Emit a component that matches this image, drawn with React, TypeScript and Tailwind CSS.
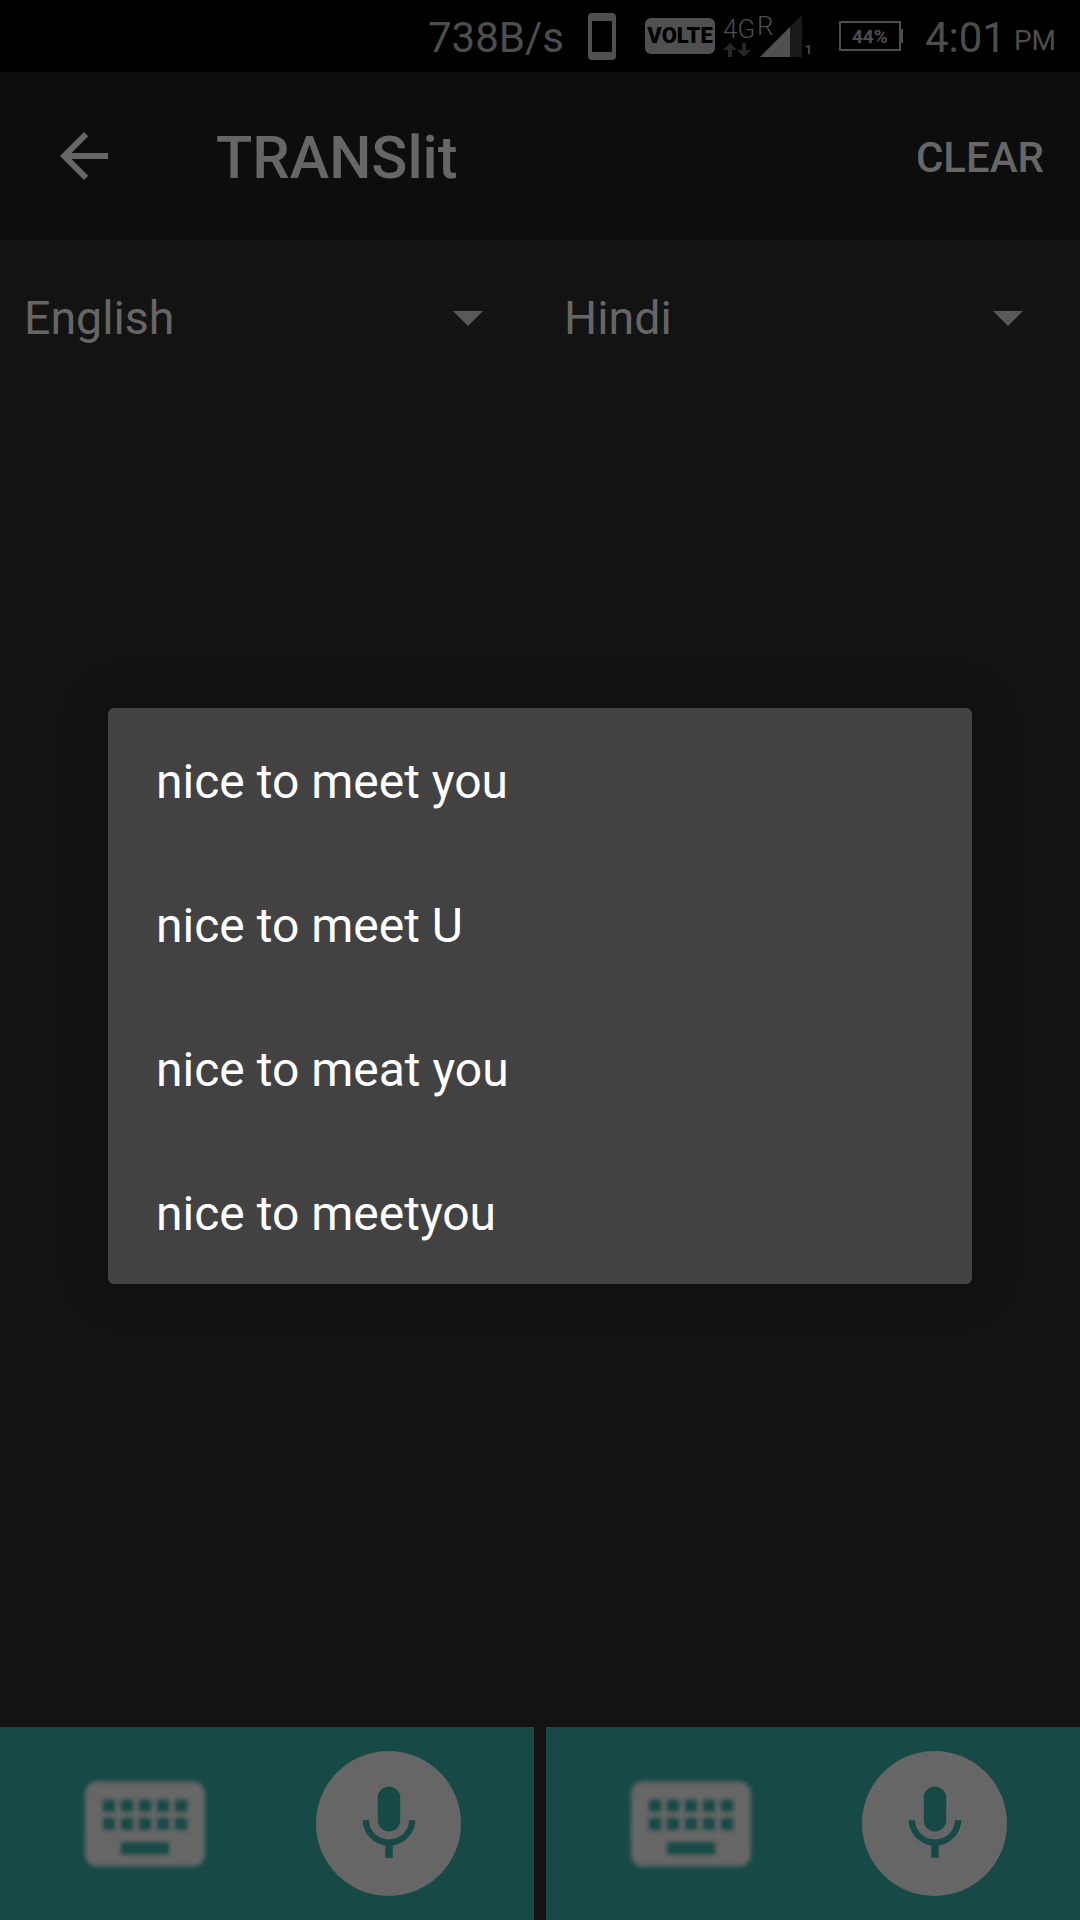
const font = { fontFamily: "Roboto, 'Noto Sans', sans-serif" };

function Keyboard() {
  return (
    <svg width="144" height="146" viewBox="0 0 24 24" preserveAspectRatio="none" className="shrink-0 blur-[2px]" fill="#666666">
      <path d="M20 5H4c-1.1 0-1.99.9-1.99 2L2 17c0 1.1.9 2 2 2h16c1.1 0 2-.9 2-2V7c0-1.1-.9-2-2-2zm-9 3h2v2h-2V8zm0 3h2v2h-2v-2zM8 8h2v2H8V8zm0 3h2v2H8v-2zm-1 2H5v-2h2v2zm0-3H5V8h2v2zm9 7H8v-2h8v2zm0-4h-2v-2h2v2zm0-3h-2V8h2v2zm3 3h-2v-2h2v2zm0-3h-2V8h2v2z" />
    </svg>
  );
}

function Panel({ className }: { className: string }) {
  return (
    <div className={"flex items-center bg-[#174a46] pl-[73px] " + className}>
      <Keyboard />
      <div className="ml-[99px] flex h-[145px] w-[145px] shrink-0 items-center justify-center rounded-full bg-[#666666]">
        <svg width="90" height="90" viewBox="0 0 24 24" fill="#174a46">
          <path d="M12 14c1.66 0 2.99-1.34 2.99-3L15 5c0-1.66-1.34-3-3-3S9 3.34 9 5v6c0 1.66 1.34 3 3 3zm5.3-3c0 3-2.54 5.1-5.3 5.1S6.7 14 6.7 11H5c0 3.41 2.72 6.23 6 6.72V21h2v-3.28c3.28-.48 6-3.3 6-6.72h-1.7z" />
        </svg>
      </div>
    </div>
  );
}

function Spinner({ label, className }: { label: string; className: string }) {
  return (
    <div className={"flex items-center " + className}>
      <span className="text-[46.5px] leading-[56px] text-[#666666]">{label}</span>
      <div className="ml-auto h-0 w-0 border-x-[15px] border-t-[15px] border-x-transparent border-t-[#595959]" />
    </div>
  );
}

function StatusBar() {
  return (
    <div className="flex h-[72px] shrink-0 items-center bg-black pl-[428px] text-[#4d4d4d]">
      <span className="mt-[4px] text-[42px] leading-none">738B/s</span>
      <svg width="28" height="47" viewBox="0 0 28 47" className="ml-[24px] shrink-0">
        <path fillRule="evenodd" fill="#505050" d="M4 0h20a4 4 0 0 1 4 4v39a4 4 0 0 1-4 4H4a4 4 0 0 1-4-4V4a4 4 0 0 1 4-4zM4 8v31h20V8z" />
      </svg>
      <div className="ml-[29px] flex h-[36px] w-[70px] shrink-0 items-center justify-center rounded-[6px] bg-[#505050]">
        <span className="text-[22px] leading-none font-black text-black">VOLTE</span>
      </div>
      <div className="relative ml-[8px] h-[50px] w-[40px] shrink-0">
        <span className="absolute left-0 top-[5px] text-[26px] leading-none font-light text-[#4d4d4d]">4G</span>
        <span className="absolute left-[34px] top-[2px] text-[26px] leading-none font-light text-[#4d4d4d]">R</span>
        <svg width="30" height="14" viewBox="0 0 30 14" className="absolute left-0 top-[32px]" fill="#262626">
          <path d="M7 0l7 7H9v7H5V7H0zM21 14l-7-7h5V0h4v7h5z" />
        </svg>
      </div>
      <svg width="42" height="42" viewBox="0 0 42 42" className="-ml-[3px] shrink-0">
        <path d="M42 0v42H0z" fill="#1a1a1a" />
        <path d="M30 12v30H0z" fill="#505050" />
      </svg>
      <span className="ml-[3px] mt-[28px] text-[12px] leading-none font-bold text-[#4d4d4d]">1</span>
      <div className="ml-[27px] flex h-[30px] w-[62px] shrink-0 items-center justify-center border-[2px] border-[#4d4d4d]">
        <span className="text-[19px] leading-none font-bold text-[#4d4d4d]">44%</span>
      </div>
      <div className="h-[14px] w-[2px] shrink-0 bg-[#4d4d4d]" />
      <span className="ml-[22px] mt-[4px] text-[42px] leading-none">4:01</span>
      <span className="ml-[8px] mt-[10px] text-[28px] leading-none">PM</span>
    </div>
  );
}

export default function App() {
  const items = ["nice to meet you", "nice to meet U", "nice to meat you", "nice to meetyou"];
  return (
    <div className="relative flex h-[1920px] w-[1080px] flex-col overflow-hidden bg-[#131313]" style={font}>
      <StatusBar />
      <div className="flex h-[168px] shrink-0 items-center bg-[#0d0d0d] pl-[48px] pr-[36px]">
        <svg width="72" height="72" viewBox="0 0 24 24" fill="#666666" className="shrink-0">
          <path d="M20 11H7.83l5.59-5.59L12 4l-8 8 8 8 1.41-1.41L7.83 13H20v-2z" />
        </svg>
        <span className="ml-[96px] pt-[6px] text-[59.5px] leading-none font-medium text-[#666666]">TRANSlit</span>
        <span className="ml-auto pt-[4px] text-[42px] leading-none font-medium text-[#666666]">CLEAR</span>
      </div>
      <div className="flex flex-1 items-start pt-[50px]">
        <Spinner label="English" className="w-[540px] pl-[24px] pr-[57px]" />
        <Spinner label="Hindi" className="w-[540px] pl-[24px] pr-[57px]" />
      </div>
      <div className="flex h-[193px] shrink-0 justify-between">
        <Panel className="w-[534px]" />
        <Panel className="w-[534px]" />
      </div>
      <div className="absolute left-[108px] top-[708px] w-[864px] rounded-[6px] bg-[#424242] shadow-[0_0_48px_rgba(0,0,0,0.25)]">
        {items.map((t) => (
          <div key={t} className="flex h-[144px] items-center pl-[48px] pt-[4px] text-[48px] text-white">
            {t}
          </div>
        ))}
      </div>
    </div>
  );
}
